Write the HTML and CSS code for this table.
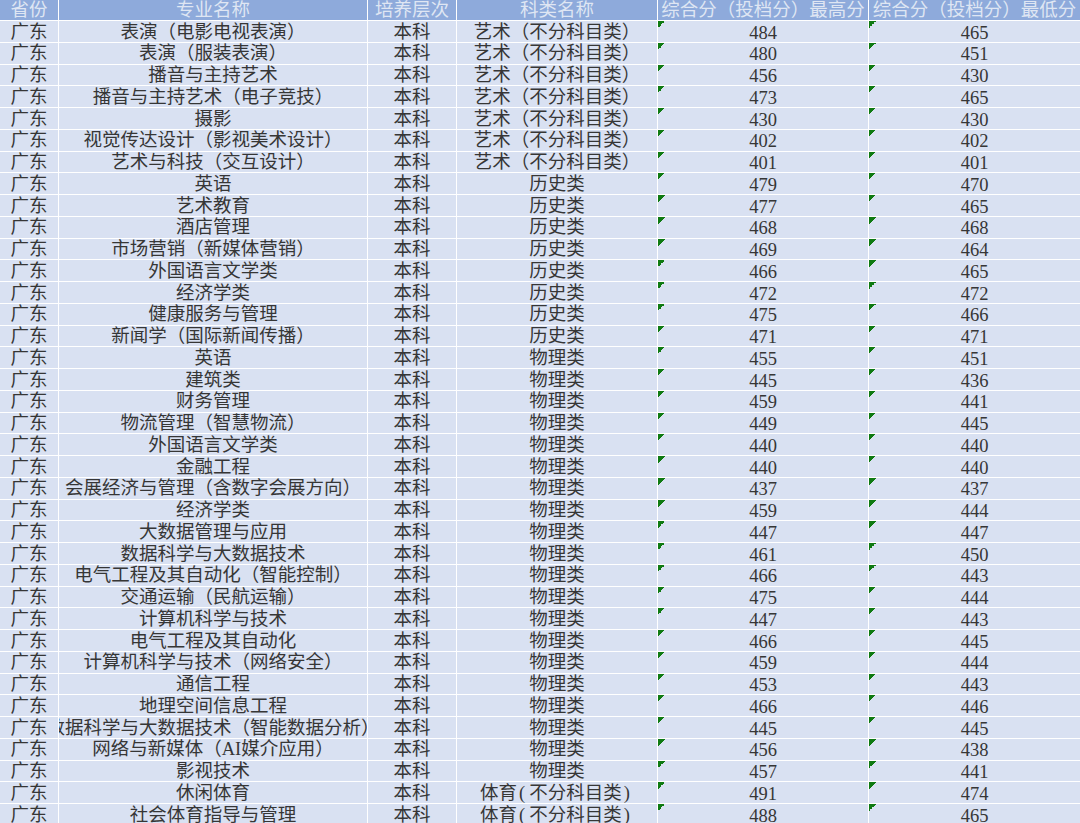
FILE: index.html
```html
<!DOCTYPE html>
<html lang="zh-CN">
<head>
<meta charset="utf-8">
<title>录取分数</title>
<link rel="stylesheet" href="styles.css">
</head>
<body>
<div class="sheet">
  <div class="row head">
    <div class="c">省份</div><div class="c">专业名称</div><div class="c">培养层次</div><div class="c">科类名称</div><div class="c">综合分（投档分）最高分</div><div class="c">综合分（投档分）最低分</div>
  </div>
  <div class="row"><div class="c">广东</div><div class="c">表演（电影电视表演）</div><div class="c">本科</div><div class="c">艺术（不分科目类）</div><div class="c n">484</div><div class="c n">465</div></div>
  <div class="row"><div class="c">广东</div><div class="c">表演（服装表演）</div><div class="c">本科</div><div class="c">艺术（不分科目类）</div><div class="c n">480</div><div class="c n">451</div></div>
  <div class="row"><div class="c">广东</div><div class="c">播音与主持艺术</div><div class="c">本科</div><div class="c">艺术（不分科目类）</div><div class="c n">456</div><div class="c n">430</div></div>
  <div class="row"><div class="c">广东</div><div class="c">播音与主持艺术（电子竞技）</div><div class="c">本科</div><div class="c">艺术（不分科目类）</div><div class="c n">473</div><div class="c n">465</div></div>
  <div class="row"><div class="c">广东</div><div class="c">摄影</div><div class="c">本科</div><div class="c">艺术（不分科目类）</div><div class="c n">430</div><div class="c n">430</div></div>
  <div class="row"><div class="c">广东</div><div class="c">视觉传达设计（影视美术设计）</div><div class="c">本科</div><div class="c">艺术（不分科目类）</div><div class="c n">402</div><div class="c n">402</div></div>
  <div class="row"><div class="c">广东</div><div class="c">艺术与科技（交互设计）</div><div class="c">本科</div><div class="c">艺术（不分科目类）</div><div class="c n">401</div><div class="c n">401</div></div>
  <div class="row"><div class="c">广东</div><div class="c">英语</div><div class="c">本科</div><div class="c">历史类</div><div class="c n">479</div><div class="c n">470</div></div>
  <div class="row"><div class="c">广东</div><div class="c">艺术教育</div><div class="c">本科</div><div class="c">历史类</div><div class="c n">477</div><div class="c n">465</div></div>
  <div class="row"><div class="c">广东</div><div class="c">酒店管理</div><div class="c">本科</div><div class="c">历史类</div><div class="c n">468</div><div class="c n">468</div></div>
  <div class="row"><div class="c">广东</div><div class="c">市场营销（新媒体营销）</div><div class="c">本科</div><div class="c">历史类</div><div class="c n">469</div><div class="c n">464</div></div>
  <div class="row"><div class="c">广东</div><div class="c">外国语言文学类</div><div class="c">本科</div><div class="c">历史类</div><div class="c n">466</div><div class="c n">465</div></div>
  <div class="row"><div class="c">广东</div><div class="c">经济学类</div><div class="c">本科</div><div class="c">历史类</div><div class="c n">472</div><div class="c n">472</div></div>
  <div class="row"><div class="c">广东</div><div class="c">健康服务与管理</div><div class="c">本科</div><div class="c">历史类</div><div class="c n">475</div><div class="c n">466</div></div>
  <div class="row"><div class="c">广东</div><div class="c">新闻学（国际新闻传播）</div><div class="c">本科</div><div class="c">历史类</div><div class="c n">471</div><div class="c n">471</div></div>
  <div class="row"><div class="c">广东</div><div class="c">英语</div><div class="c">本科</div><div class="c">物理类</div><div class="c n">455</div><div class="c n">451</div></div>
  <div class="row"><div class="c">广东</div><div class="c">建筑类</div><div class="c">本科</div><div class="c">物理类</div><div class="c n">445</div><div class="c n">436</div></div>
  <div class="row"><div class="c">广东</div><div class="c">财务管理</div><div class="c">本科</div><div class="c">物理类</div><div class="c n">459</div><div class="c n">441</div></div>
  <div class="row"><div class="c">广东</div><div class="c">物流管理（智慧物流）</div><div class="c">本科</div><div class="c">物理类</div><div class="c n">449</div><div class="c n">445</div></div>
  <div class="row"><div class="c">广东</div><div class="c">外国语言文学类</div><div class="c">本科</div><div class="c">物理类</div><div class="c n">440</div><div class="c n">440</div></div>
  <div class="row"><div class="c">广东</div><div class="c">金融工程</div><div class="c">本科</div><div class="c">物理类</div><div class="c n">440</div><div class="c n">440</div></div>
  <div class="row"><div class="c">广东</div><div class="c">会展经济与管理（含数字会展方向）</div><div class="c">本科</div><div class="c">物理类</div><div class="c n">437</div><div class="c n">437</div></div>
  <div class="row"><div class="c">广东</div><div class="c">经济学类</div><div class="c">本科</div><div class="c">物理类</div><div class="c n">459</div><div class="c n">444</div></div>
  <div class="row"><div class="c">广东</div><div class="c">大数据管理与应用</div><div class="c">本科</div><div class="c">物理类</div><div class="c n">447</div><div class="c n">447</div></div>
  <div class="row"><div class="c">广东</div><div class="c">数据科学与大数据技术</div><div class="c">本科</div><div class="c">物理类</div><div class="c n">461</div><div class="c n">450</div></div>
  <div class="row"><div class="c">广东</div><div class="c">电气工程及其自动化（智能控制）</div><div class="c">本科</div><div class="c">物理类</div><div class="c n">466</div><div class="c n">443</div></div>
  <div class="row"><div class="c">广东</div><div class="c">交通运输（民航运输）</div><div class="c">本科</div><div class="c">物理类</div><div class="c n">475</div><div class="c n">444</div></div>
  <div class="row"><div class="c">广东</div><div class="c">计算机科学与技术</div><div class="c">本科</div><div class="c">物理类</div><div class="c n">447</div><div class="c n">443</div></div>
  <div class="row"><div class="c">广东</div><div class="c">电气工程及其自动化</div><div class="c">本科</div><div class="c">物理类</div><div class="c n">466</div><div class="c n">445</div></div>
  <div class="row"><div class="c">广东</div><div class="c">计算机科学与技术（网络安全）</div><div class="c">本科</div><div class="c">物理类</div><div class="c n">459</div><div class="c n">444</div></div>
  <div class="row"><div class="c">广东</div><div class="c">通信工程</div><div class="c">本科</div><div class="c">物理类</div><div class="c n">453</div><div class="c n">443</div></div>
  <div class="row"><div class="c">广东</div><div class="c">地理空间信息工程</div><div class="c">本科</div><div class="c">物理类</div><div class="c n">466</div><div class="c n">446</div></div>
  <div class="row"><div class="c">广东</div><div class="c">数据科学与大数据技术（智能数据分析）</div><div class="c">本科</div><div class="c">物理类</div><div class="c n">445</div><div class="c n">445</div></div>
  <div class="row"><div class="c">广东</div><div class="c">网络与新媒体（AI媒介应用）</div><div class="c">本科</div><div class="c">物理类</div><div class="c n">456</div><div class="c n">438</div></div>
  <div class="row"><div class="c">广东</div><div class="c">影视技术</div><div class="c">本科</div><div class="c">物理类</div><div class="c n">457</div><div class="c n">441</div></div>
  <div class="row"><div class="c">广东</div><div class="c">休闲体育</div><div class="c">本科</div><div class="c">体育<span class="hp">(</span>不分科目类<span class="hp">)</span></div><div class="c n">491</div><div class="c n">474</div></div>
  <div class="row"><div class="c">广东</div><div class="c">社会体育指导与管理</div><div class="c">本科</div><div class="c">体育<span class="hp">(</span>不分科目类<span class="hp">)</span></div><div class="c n">488</div><div class="c n">465</div></div>
</div>
</body>
</html>
```

FILE: styles.css
```css
html, body {
  margin: 0;
  padding: 0;
  background: #ffffff;
  overflow: hidden;
}

.sheet {
  display: flex;
  flex-direction: column;
  gap: 1px;
  width: 1080px;
  background: #ffffff;
  font-family: "Liberation Serif", "Noto Sans CJK SC", serif;
  font-size: 18.5px;
  color: #363636;
}

.row {
  display: grid;
  grid-template-columns: 58px 308px 88px 200px 210px 1fr;
  column-gap: 1px;
  height: 20.75px;
}

.row.head {
  height: 20px;
}

.c {
  position: relative;
  box-sizing: border-box;
  display: flex;
  align-items: center;
  justify-content: center;
  overflow: hidden;
  white-space: nowrap;
  line-height: 1;
  padding-top: 1px;
  background: #d9e1f2;
}

.head .c {
  background: #8eaadb;
  color: #dfe6f3;
  padding-top: 0;
}

.n {
  padding-top: 3px;
}

.n::before {
  content: "";
  position: absolute;
  left: 0;
  top: 0;
  width: 7px;
  height: 7px;
  background: linear-gradient(135deg, #0f7a12 50%, transparent 50%);
}

.hp {
  padding: 0 4px 0 2px;
}
```
